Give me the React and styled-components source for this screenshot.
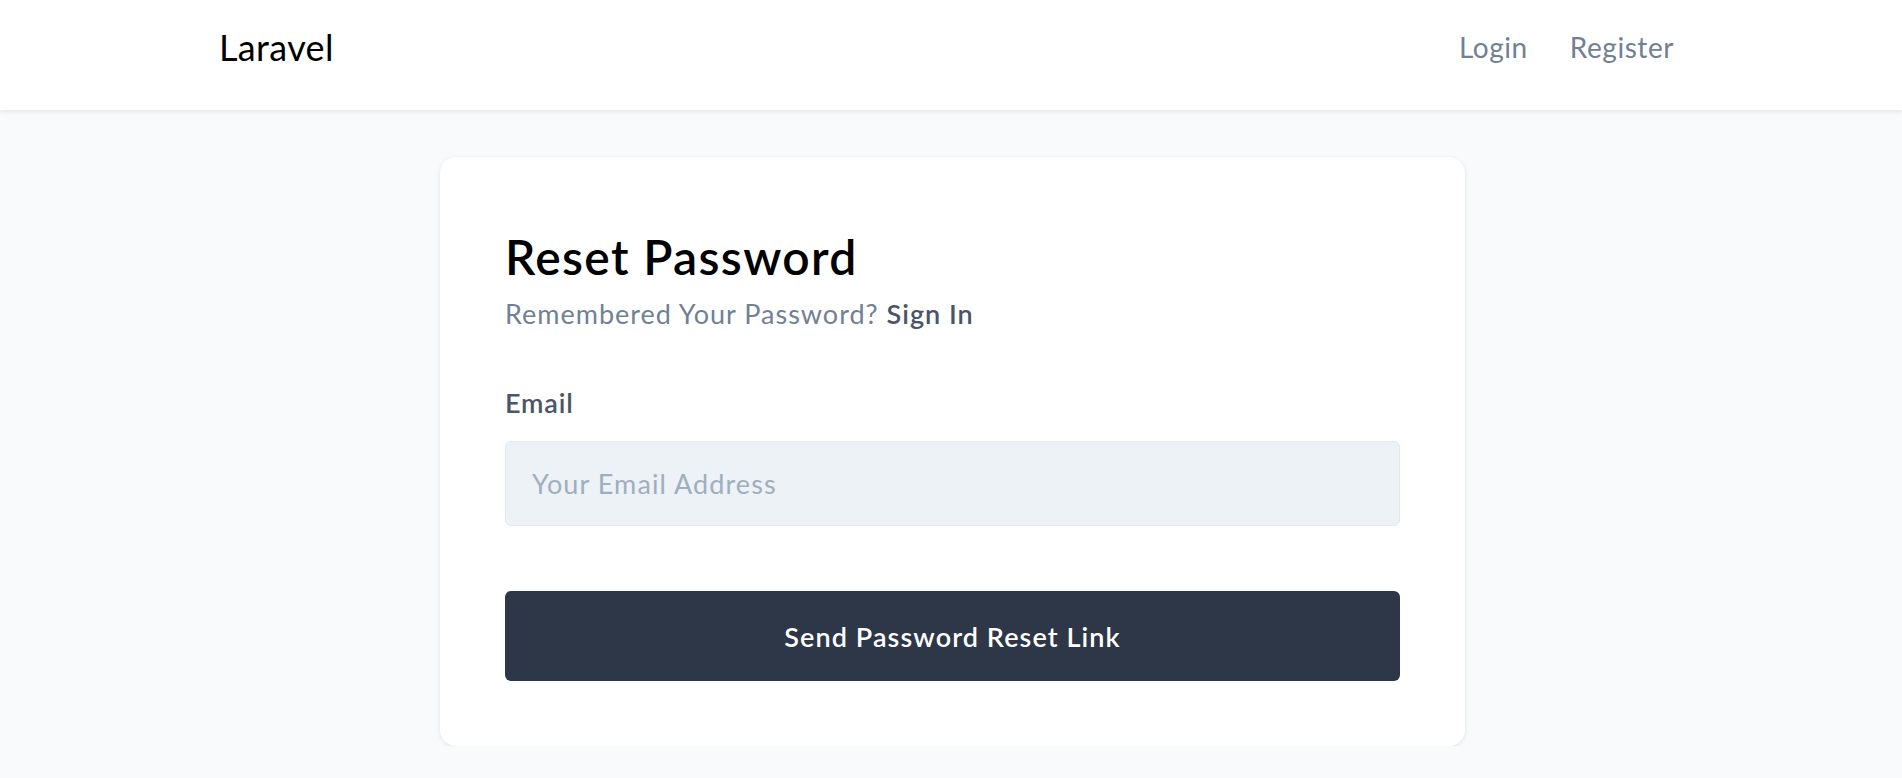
import { createGlobalStyle, styled } from 'styled-components'

const GlobalStyle = createGlobalStyle`
  html, body {
    margin: 0;
    padding: 0;
    background-color: #f8fafc;
    font-family: Lato, "Open Sans", sans-serif;
  }
  * {
    box-sizing: border-box;
  }
`

const StyledHeader = styled.header`
  background-color: #fff;
  height: 110px;
  padding-bottom: 14px;
  box-shadow: 0 2px 4px rgba(0, 0, 0, 0.08);
  display: flex;
  align-items: center;
`

const StyledNavContainer = styled.div`
  width: 1464px;
  margin: 0 auto;
  display: flex;
  align-items: center;
  justify-content: space-between;
`

const StyledBrand = styled.a`
  font-size: 36px;
  line-height: 1.2;
  letter-spacing: 0.01em;
  color: #000;
  text-decoration: none;
`

const StyledNavLinks = styled.nav`
  display: flex;
  gap: 42px;
  padding-right: 9px;
`

const StyledNavLink = styled.a`
  font-size: 28px;
  line-height: 1.2;
  letter-spacing: 0.02em;
  color: #718096;
  text-decoration: none;
`

const StyledMain = styled.main`
  padding-top: 47px;
  display: flex;
  justify-content: center;
`

const StyledCard = styled.div`
  width: 1025px;
  margin-left: 3px;
  background-color: #fff;
  border-radius: 16px;
  box-shadow: 0 1px 4px rgba(0, 0, 0, 0.1);
  padding: 71px 65px 65px;
`

const StyledTitle = styled.h1`
  margin: 0;
  font-size: 48px;
  line-height: 1.2;
  font-weight: 600;
  letter-spacing: 0.028em;
  color: #000;
`

const StyledSubtitle = styled.p`
  margin: 12px 0 0;
  font-size: 27px;
  line-height: 1.2;
  letter-spacing: 0.037em;
  color: #718096;

  a {
    color: #4a5568;
    font-weight: 600;
    text-decoration: none;
  }
`

const StyledLabel = styled.label`
  display: block;
  margin-top: 57px;
  font-size: 27px;
  line-height: 1.2;
  font-weight: 600;
  letter-spacing: 0.03em;
  color: #4a5568;
`

const StyledInput = styled.input`
  display: block;
  width: 100%;
  height: 85px;
  margin-top: 22px;
  padding: 0 26px;
  background-color: #edf2f7;
  border: 1px solid #e2e8f0;
  border-radius: 6px;
  font-family: inherit;
  font-size: 27px;
  letter-spacing: 0.04em;
  color: #4a5568;
  outline: none;

  &::placeholder {
    color: #a0aec0;
  }
`

const StyledButton = styled.button`
  display: block;
  width: 100%;
  height: 90px;
  margin-top: 65px;
  background-color: #2d3748;
  border: none;
  border-radius: 6px;
  color: #fff;
  font-family: inherit;
  font-size: 27px;
  font-weight: 600;
  letter-spacing: 0.04em;
  cursor: pointer;
`

const App = () => {
  return (
    <>
      <GlobalStyle />
      <StyledHeader>
        <StyledNavContainer>
          <StyledBrand href='#'>Laravel</StyledBrand>
          <StyledNavLinks>
            <StyledNavLink href='#'>Login</StyledNavLink>
            <StyledNavLink href='#'>Register</StyledNavLink>
          </StyledNavLinks>
        </StyledNavContainer>
      </StyledHeader>
      <StyledMain>
        <StyledCard>
          <StyledTitle>Reset Password</StyledTitle>
          <StyledSubtitle>
            Remembered Your Password? <a href='#'>Sign In</a>
          </StyledSubtitle>
          <StyledLabel htmlFor='email'>Email</StyledLabel>
          <StyledInput id='email' type='email' placeholder='Your Email Address' />
          <StyledButton type='button'>Send Password Reset Link</StyledButton>
        </StyledCard>
      </StyledMain>
    </>
  )
}

export default App
